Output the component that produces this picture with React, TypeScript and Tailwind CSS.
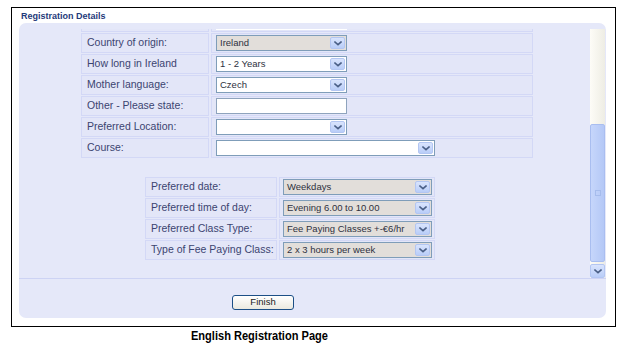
import React from "react";

const FONT = { fontFamily: "'Liberation Sans', Arial, sans-serif" };

function Chevron() {
  return (
    <svg width="8" height="5" viewBox="0 0 8 5" fill="none">
      <path d="M1 1l3 2.6L7 1" stroke="#4a5f86" strokeWidth="1.6" strokeLinecap="square" />
    </svg>
  );
}

function ArrowBox() {
  return (
    <div className="m-px flex w-[15px] items-center justify-center rounded-[2px] border border-[#b3c6f2] bg-gradient-to-b from-[#d9e4fd] to-[#b9cdf8]">
      <Chevron />
    </div>
  );
}

function Select({ value, width, grey }: { value: string; width: string; grey?: boolean }) {
  return (
    <div
      className={`flex h-[16px] items-stretch border border-[#7f9db9] ${width} ${grey ? "bg-[#e2deda]" : "bg-white"}`}
    >
      <div className="flex flex-1 items-center whitespace-nowrap pl-[3px] text-[9.5px] text-[#2e3140]">{value}</div>
      <ArrowBox />
    </div>
  );
}

function Input({ width }: { width: string }) {
  return <div className={`h-[16px] border border-[#8ea3bd] bg-white ${width}`} />;
}

function Row({ label, children, labelW, fieldW }: { label: string; children: React.ReactNode; labelW: string; fieldW: string }) {
  return (
    <div className="flex h-[20px] gap-[2px]">
      <div className={`flex items-center whitespace-nowrap border border-[#d3d8f6] bg-[#e3e6f8] pl-[5px] text-[10.5px] text-[#3b4470] ${labelW}`}>
        {label}
      </div>
      <div className={`flex items-center border border-[#d3d8f6] bg-[#e3e6f8] ${fieldW}`}>{children}</div>
    </div>
  );
}

const FIRST = [
  { label: "Country of origin:", kind: "select", value: "Ireland", grey: true, w: "w-[131px]" },
  { label: "How long in Ireland", kind: "select", value: "1 - 2 Years", w: "w-[131px]" },
  { label: "Mother language:", kind: "select", value: "Czech", w: "w-[131px]" },
  { label: "Other - Please state:", kind: "input", value: "", w: "w-[131px]" },
  { label: "Preferred Location:", kind: "select", value: "", w: "w-[131px]" },
  { label: "Course:", kind: "select", value: "", w: "w-[219px]" },
];

const SECOND = [
  { label: "Preferred date:", value: "Weekdays" },
  { label: "Preferred time of day:", value: "Evening 6.00 to 10.00" },
  { label: "Preferred Class Type:", value: "Fee Paying Classes +-€6/hr" },
  { label: "Type of Fee Paying Class:", value: "2 x 3 hours per week" },
];

export default function App() {
  return (
    <div className="h-[347px] w-[627px] overflow-hidden bg-white" style={FONT}>
      <div className="ml-[11px] mt-[7px] flex h-[320px] w-[605px] flex-col border border-black">
        <div className="h-[15px] pl-[9px] pt-[3px] text-[9px] font-bold leading-[10px] text-[#1f3a7a]">
          Registration Details
        </div>

        <div className="ml-[7px] flex h-[295px] w-[587px] flex-col rounded-[7px] bg-[#e5e8f9]">
          {/* scrolling area */}
          <div className="flex h-[255px] pt-[6px]">
            <div className="flex-1 overflow-hidden">
              <div className="flex flex-col gap-[1px] pl-[62px]">
                <div className="flex h-[3px] gap-[2px]">
                  <div className="w-[128px] border-x border-b border-[#d3d8f6] bg-[#e3e6f8]" />
                  <div className="w-[322px] border-x border-b border-[#d3d8f6] bg-[#e3e6f8] pl-[4px]">
                    <div className="h-px w-[131px] bg-white" />
                  </div>
                </div>
                {FIRST.map((r) => (
                  <Row key={r.label} label={r.label} labelW="w-[128px]" fieldW="w-[322px] pl-[4px]">
                    {r.kind === "input" ? <Input width={r.w} /> : <Select value={r.value} width={r.w} grey={r.grey} />}
                  </Row>
                ))}
              </div>

              <div className="mt-[19px] flex flex-col gap-[1px] pl-[126px]">
                {SECOND.map((r) => (
                  <Row key={r.label} label={r.label} labelW="w-[132px]" fieldW="w-[156px] pl-[3px]">
                    <Select value={r.value} width="w-[149px]" grey />
                  </Row>
                ))}
              </div>
            </div>

            {/* scrollbar */}
            <div className="mr-[1px] flex w-[15px] flex-col bg-gradient-to-r from-[#fdfcf7] to-[#eeede4]">
              <div className="h-[95px]" />
              <div className="flex h-[138px] items-center justify-center rounded-[2px] border border-[#a9bef0] bg-gradient-to-r from-[#c6d6fb] to-[#b4c8f6]">
                <div className="h-[6px] w-[6px] border border-[#a6bcec]" />
              </div>
              <div className="h-[2px]" />
              <div className="flex h-[14px] items-center justify-center rounded-[2px] border border-[#b3c6f2] bg-gradient-to-b from-[#d9e4fd] to-[#b9cdf8]">
                <Chevron />
              </div>
            </div>
          </div>

          <div className="h-px bg-[#cdd3f4]" />

          <div className="pl-[213px] pt-[16px]">
            <div className="flex h-[15px] w-[62px] items-center justify-center rounded-[3px] border border-[#1c4f86] bg-gradient-to-b from-white to-[#ebe9df] text-[9.5px] text-[#222]">
              Finish
            </div>
          </div>
        </div>
      </div>

      <div className="flex pl-[191px] pt-[2px]">
        <div className="origin-left scale-x-[0.85] whitespace-nowrap text-[13px] font-bold leading-[14px] text-black">
          English Registration Page
        </div>
      </div>
    </div>
  );
}
